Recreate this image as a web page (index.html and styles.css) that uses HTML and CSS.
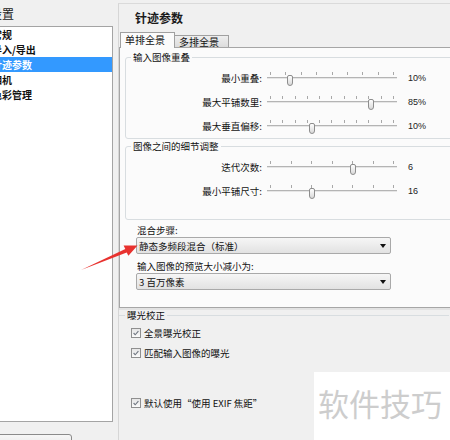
FILE: index.html
```html
<!DOCTYPE html>
<html lang="zh">
<head>
<meta charset="utf-8">
<title>针迹参数</title>
<link rel="stylesheet" href="styles.css">
</head>
<body>
<div class="app">
  <aside class="side">
    <div class="side-title">设置</div>
    <ul class="tree">
      <li>常规</li>
      <li>导入/导出</li>
      <li class="sel">针迹参数</li>
      <li>相机</li>
      <li>色彩管理</li>
    </ul>
    <div class="side-btn"></div>
  </aside>

  <main class="pane">
    <div class="pane-head">针迹参数</div>
    <div class="tabs">
      <div class="tab active">单排全景</div>
      <div class="tab">多排全景</div>
    </div>
    <div class="tabpanel">
      <fieldset class="group g1">
        <legend>输入图像重叠</legend>
        <div class="srow">
          <span class="slabel">最小重叠:</span>
          <div class="slider"><div class="ticks"><i></i><i></i><i></i><i></i><i></i><i></i><i></i><i></i><i></i></div><div class="track"></div><div class="thumb" style="left:20px"></div></div>
          <span class="sval">10%</span>
        </div>
        <div class="srow">
          <span class="slabel">最大平铺数里:</span>
          <div class="slider"><div class="ticks"><i></i><i></i><i></i><i></i><i></i><i></i><i></i><i></i><i></i><i></i><i></i></div><div class="track"></div><div class="thumb" style="left:101px"></div></div>
          <span class="sval">85%</span>
        </div>
        <div class="srow">
          <span class="slabel">最大垂直偏移:</span>
          <div class="slider"><div class="ticks"><i></i><i></i><i></i><i></i><i></i><i></i><i></i><i></i><i></i><i></i><i></i></div><div class="track"></div><div class="thumb" style="left:42px"></div></div>
          <span class="sval">10%</span>
        </div>
      </fieldset>
      <fieldset class="group g2">
        <legend>图像之间的细节调整</legend>
        <div class="srow">
          <span class="slabel">迭代次数:</span>
          <div class="slider"><div class="ticks"><i></i><i></i><i></i><i></i><i></i><i></i><i></i></div><div class="track"></div><div class="thumb" style="left:83px"></div></div>
          <span class="sval">6</span>
        </div>
        <div class="srow">
          <span class="slabel">最小平铺尺寸:</span>
          <div class="slider"><div class="ticks"><i></i><i></i><i></i><i></i><i></i><i></i><i></i></div><div class="track"></div><div class="thumb" style="left:42px"></div></div>
          <span class="sval">16</span>
        </div>
      </fieldset>
      <div class="field-label">混合步骤:</div>
      <div class="dropdown"><span>静态多频段混合（标准）</span><b class="caret"></b></div>
      <div class="field-label second">输入图像的预览大小减小为:</div>
      <div class="dropdown"><span>3 百万像素</span><b class="caret"></b></div>
    </div>

    <fieldset class="group exp">
      <legend>曝光校正</legend>
      <label class="check"><span class="box"><svg viewBox="0 0 10 10" width="10" height="10"><path d="M2 5 L4 7.2 L8 2.6" fill="none" stroke="#6f7680" stroke-width="1.4"/></svg></span>全景曝光校正</label>
      <label class="check"><span class="box"><svg viewBox="0 0 10 10" width="10" height="10"><path d="M2 5 L4 7.2 L8 2.6" fill="none" stroke="#6f7680" stroke-width="1.4"/></svg></span>匹配输入图像的曝光</label>
    </fieldset>
    <label class="check exif"><span class="box"><svg viewBox="0 0 10 10" width="10" height="10"><path d="M2 5 L4 7.2 L8 2.6" fill="none" stroke="#6f7680" stroke-width="1.4"/></svg></span>默认使用“使用 EXIF 焦距”</label>
  </main>

  <div class="watermark">软件技巧</div>
  <svg class="arrow" width="450" height="440" viewBox="0 0 450 440">
    <polygon points="81,270 125.3,249.1 123.6,245.6 137.5,245.5 128.4,255.8 126.7,252.4" fill="#e8322f"/>
  </svg>
</div>
</body>
</html>
```

FILE: styles.css
```css
* { box-sizing: border-box; }

html, body {
  margin: 0;
  width: 450px;
  height: 440px;
  overflow: hidden;
  background: #f0f0f0;
  font-family: "Noto Sans CJK SC", "Noto Sans", sans-serif;
  color: #111;
}

.app {
  position: relative;
  display: flex;
  width: 450px;
  height: 440px;
}

/* left side */
.side {
  flex: none;
  width: 113px;
  display: flex;
  flex-direction: column;
}
.side > * { flex-shrink: 0; }
.side-title {
  height: 26px;
  line-height: 28px;
  margin-left: -10px;
  font-size: 12px;
  color: #222;
}
.tree {
  list-style: none;
  margin: 0 0 0 -2px;
  padding: 0;
  width: 115px;
  height: 396px;
  background: #fff;
  border: 1px solid #a4a4a4;
}
.tree li {
  height: 15px;
  line-height: 15px;
  font-size: 10px;
  font-weight: bold;
  text-indent: -7px;
  white-space: nowrap;
  overflow: hidden;
}
.tree li.sel {
  background: #3399ff;
  color: #fff;
}
.side-btn {
  margin: 12px 0 0 -10px;
  width: 82px;
  height: 22px;
  border: 1px solid #8a8a8a;
  border-radius: 3px;
  background: linear-gradient(#f6f6f6, #dedede);
}

/* right pane */
.pane {
  flex: none;
  width: 360px;
  margin: 3px 0 0 5px;
  border-left: 1px solid #d6d6d6;
  border-top: 1px solid #dadada;
}
.pane-head {
  height: 28px;
  line-height: 28px;
  padding-left: 16px;
  font-size: 12px;
  font-weight: bold;
  color: #1a1a1a;
}
.tabs {
  display: flex;
  align-items: flex-end;
  height: 16px;
  padding-left: 1px;
  margin-bottom: -1px;
  position: relative;
  z-index: 1;
}
.tab {
  font-size: 10px;
  white-space: nowrap;
  border: 1px solid #a0a0a0;
  border-bottom: none;
}
.tab.active {
  width: 55px;
  height: 16px;
  line-height: 14px;
  padding-left: 4px;
  background: #fbfbfb;
}
.tab:not(.active) {
  width: 54px;
  height: 12px;
  line-height: 11px;
  margin-bottom: 1px;
  padding-left: 4px;
  border-left: none;
  background: linear-gradient(#eeeeee, #dcdcdc);
}
.tabpanel {
  border: 1px solid #a6a6a6;
  background: #fbfbfb;
  padding: 2px 0 17px 5px;
  box-shadow: 0 2px 0 #e2e2e2;
}

/* group boxes */
.group {
  margin: 0;
  padding: 2px 0 0 0;
  width: 330px;
  border: 1px solid #d8dde0;
  border-radius: 3px;
  min-width: 0;
}
.group legend {
  font-size: 9.5px;
  line-height: 14px;
  padding: 0 2px;
  margin-left: 5px;
  color: #111;
}
.g2 { padding-bottom: 16px; }

.srow {
  display: grid;
  grid-template-columns: 141px 130px auto;
  align-items: center;
  height: 24px;
}
.slabel {
  text-align: right;
  padding-right: 5px;
  font-size: 9.5px;
  white-space: nowrap;
}
.slider {
  position: relative;
  height: 24px;
}
.ticks {
  display: flex;
  justify-content: space-between;
  padding: 0 3px;
  margin-top: 6px;
  height: 3px;
}
.ticks i {
  width: 1px;
  height: 3px;
  background: #a8a8a8;
}
.track {
  margin-top: 2px;
  height: 2px;
  border-top: 1px solid #b4b4b4;
  border-bottom: 1px solid #e6e6e6;
}
.thumb {
  position: absolute;
  top: 9px;
  width: 6px;
  height: 11px;
  border: 1px solid #8d8d8d;
  border-radius: 2px 2px 3px 3px;
  background: linear-gradient(#fefefe, #d9d9d9);
}
.sval {
  margin-left: 11px;
  font-family: "Liberation Sans", sans-serif;
  font-size: 9px;
  color: #222;
}

.field-label {
  margin: 4px 0 0 12px;
  font-size: 9.5px;
  line-height: 13px;
}
.field-label.second { margin-top: 6px; }
.dropdown {
  margin-left: 11px;
  width: 255px;
  height: 17px;
  border: 1px solid #a9a9a9;
  border-radius: 2px;
  background: linear-gradient(#f6f6f6, #e2e2e2);
  display: flex;
  align-items: center;
  justify-content: space-between;
  padding: 0 4px 0 2px;
  font-size: 9.5px;
}
.caret {
  width: 0;
  height: 0;
  border-top: 4px solid #111;
  border-left: 3px solid transparent;
  border-right: 3px solid transparent;
}

/* exposure */
.group.exp {
  border: none;
  border-top: 1px solid #d8dde0;
  border-radius: 0;
  padding-top: 1px;
}
.group.exp legend { margin-left: 6px; }

.check {
  display: flex;
  align-items: center;
  gap: 3px;
  height: 20px;
  padding-left: 12px;
  font-size: 9.5px;
  white-space: nowrap;
}
.box {
  width: 10px;
  height: 10px;
  border: 1px solid #8f8f8f;
  background: linear-gradient(#e6e6e6, #fbfbfb);
  display: flex;
  align-items: center;
  justify-content: center;
}
.box svg { display: block; width: 8px; height: 8px; }
.check.exif { margin-top: 30px; }

/* overlays */
.watermark {
  position: absolute;
  left: 314px;
  top: 372px;
  width: 136px;
  height: 68px;
  background: #fff;
  padding: 15px 0 0 4px;
  font-size: 31px;
  line-height: 32px;
  color: #cdcdcd;
  white-space: nowrap;
}
.arrow {
  position: absolute;
  left: 0;
  top: 0;
  pointer-events: none;
}
```
